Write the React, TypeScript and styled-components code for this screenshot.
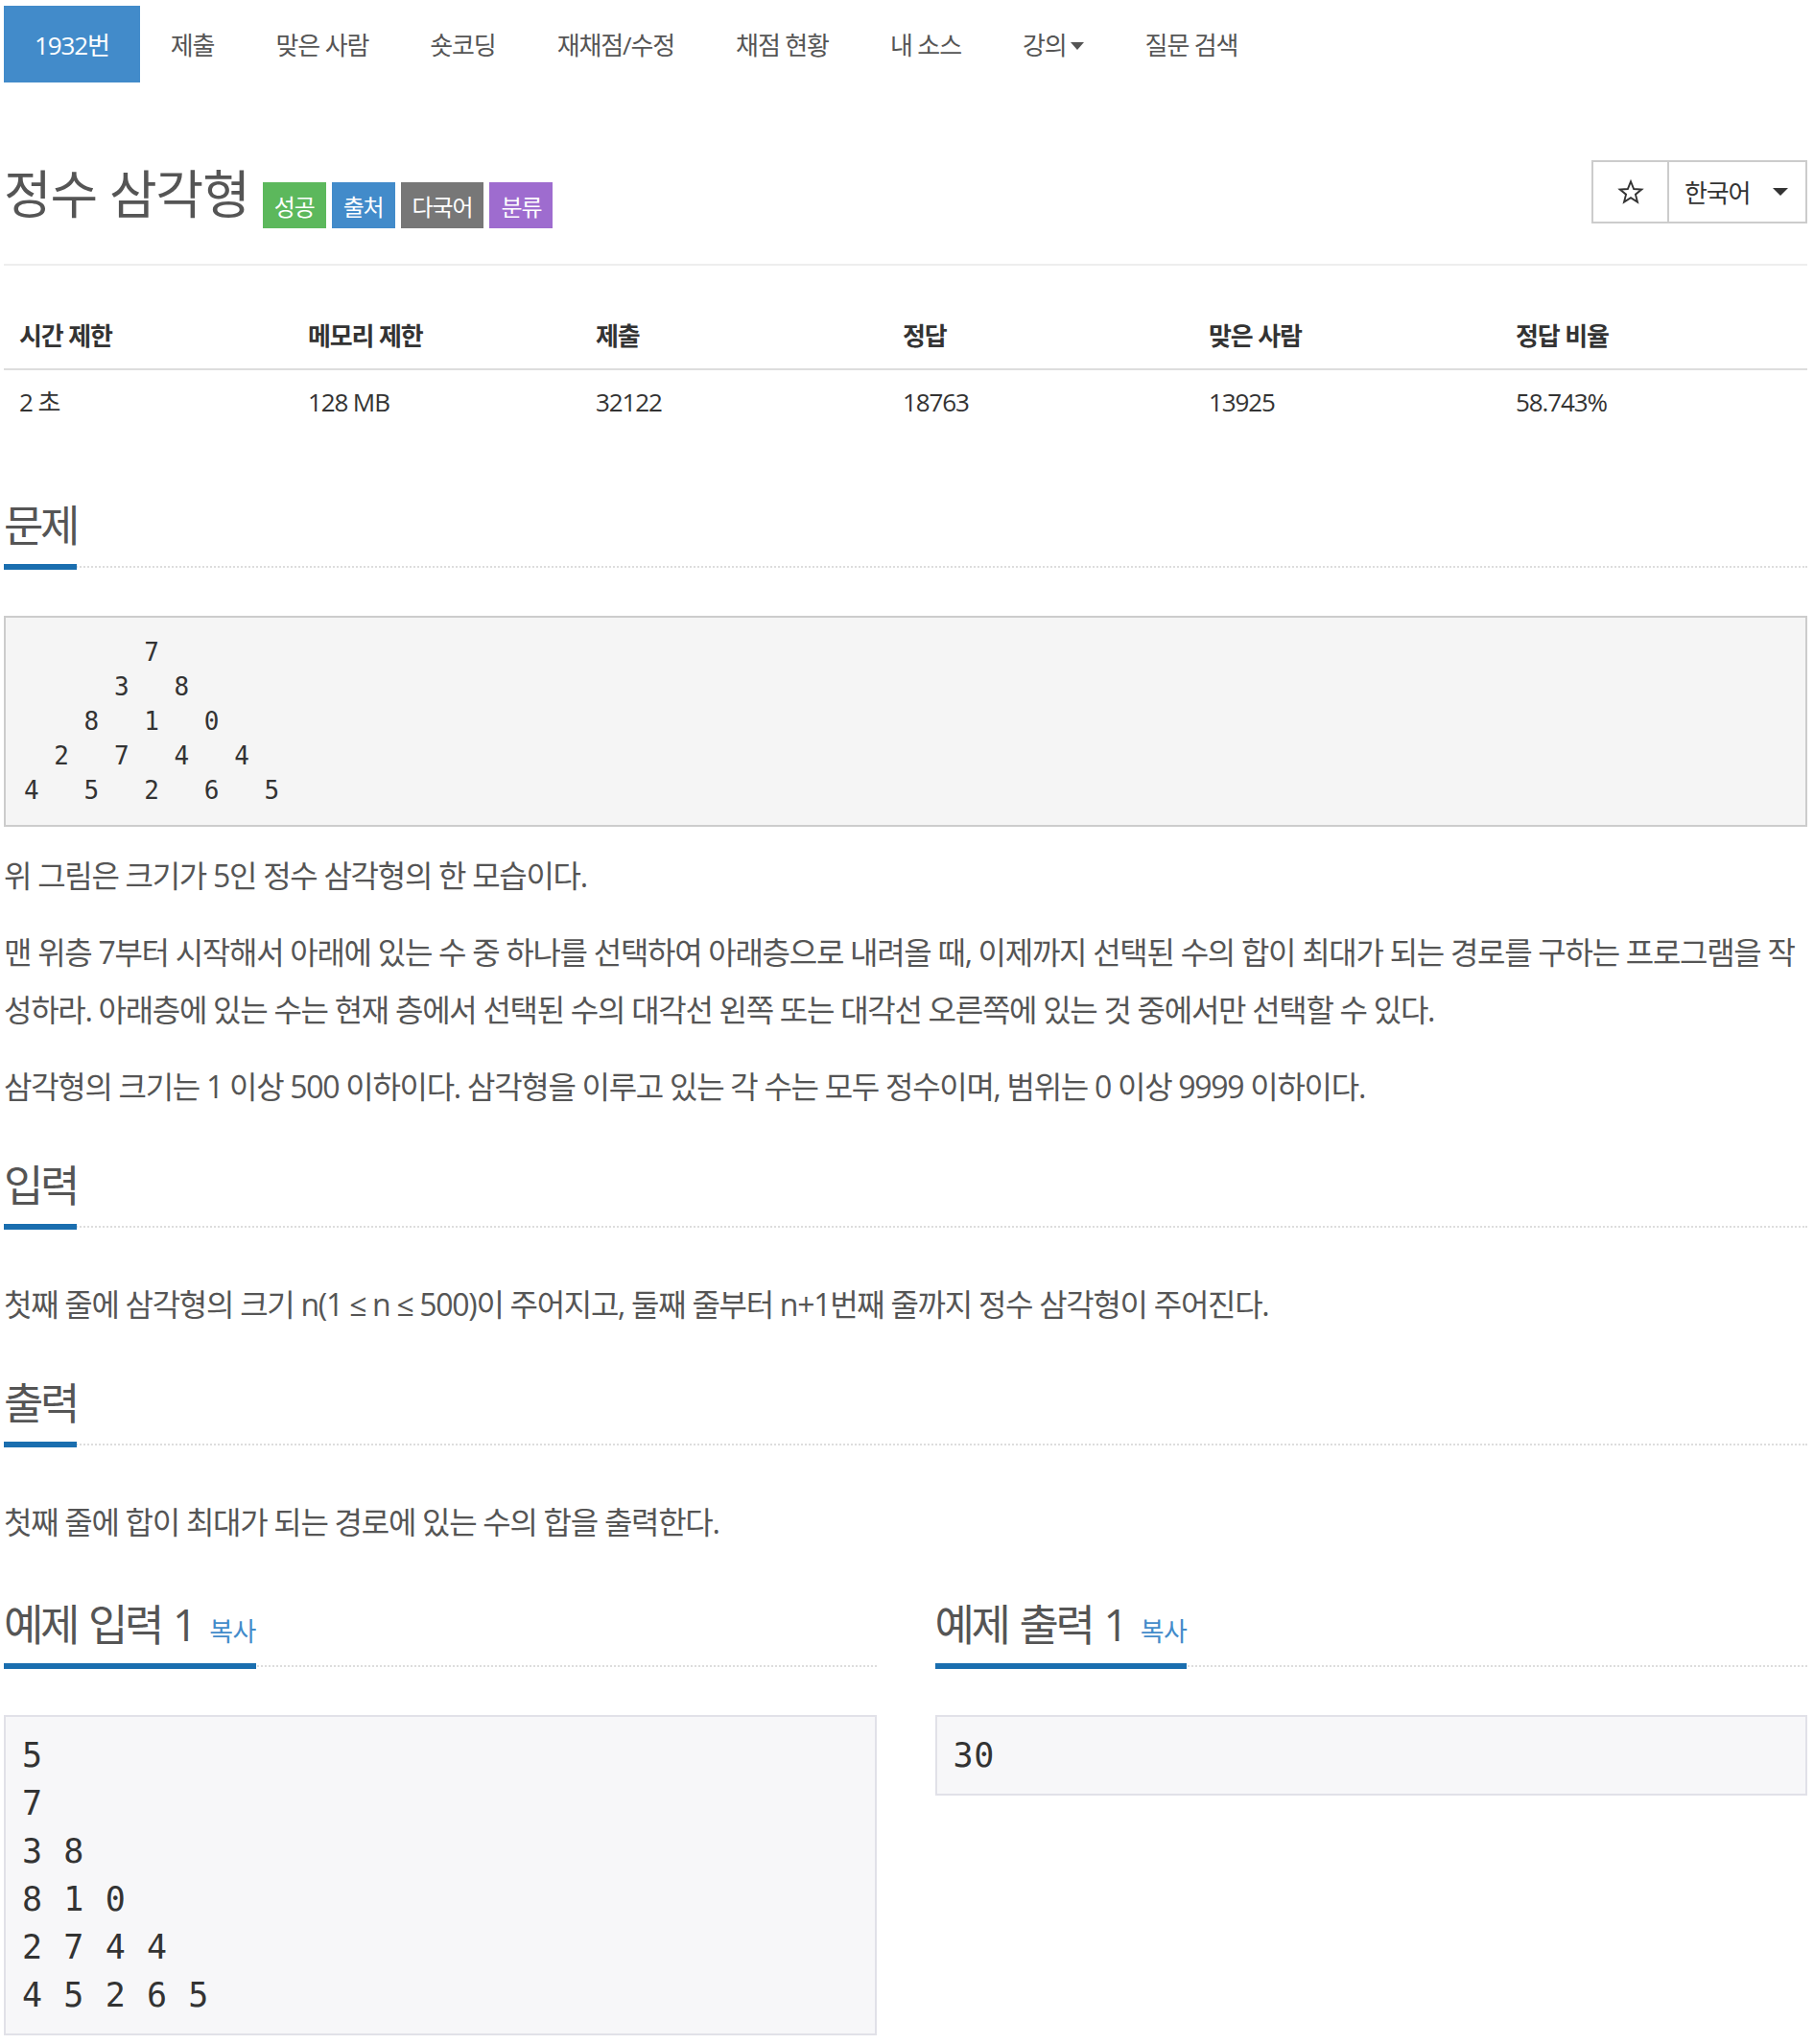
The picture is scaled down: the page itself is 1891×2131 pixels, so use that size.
import React from "react";
import styled, { createGlobalStyle } from "styled-components";

const GlobalStyle = createGlobalStyle`
  html, body {
    margin: 0;
    padding: 0;
    background: #fff;
  }
  body {
    font-family: "Open Sans", "Noto Sans CJK KR", sans-serif;
    color: #333;
    letter-spacing: -1.12px;
  }
`;

const Page = styled.div`
  padding: 6px 7px 40px 4px;
`;

const NavBar = styled.nav`
  display: flex;
  height: 80px;
`;

const NavItem = styled.a<{ $active?: boolean }>`
  display: flex;
  align-items: center;
  padding: 0 32px;
  font-size: 26px;
  text-decoration: none;
  color: ${(p) => (p.$active ? "#fff" : "#555")};
  background: ${(p) => (p.$active ? "#428bca" : "transparent")};
`;

const Caret = styled.span`
  display: inline-block;
  margin-left: 4px;
  margin-top: 4px;
  border-top: 8px solid #555;
  border-left: 7px solid transparent;
  border-right: 7px solid transparent;
`;

const Header = styled.div`
  display: flex;
  justify-content: space-between;
  align-items: flex-start;
  margin-top: 81px;
  padding-bottom: 37px;
  border-bottom: 2px solid #eee;
`;

const TitleRow = styled.div`
  display: flex;
  align-items: flex-start;
`;

const Title = styled.h1`
  margin: 4px 0 0;
  font-size: 54px;
  font-weight: 400;
  line-height: 62px;
  color: #555;
`;

const Labels = styled.div`
  display: flex;
  gap: 6px;
  margin: 23px 0 0 14px;
`;

const Label = styled.span<{ $bg: string }>`
  display: flex;
  align-items: center;
  height: 48px;
  padding: 0 12px;
  font-size: 24px;
  color: #fff;
  background: ${(p) => p.$bg};
`;

const ButtonGroup = styled.div`
  display: flex;
  height: 66px;
`;

const GroupButton = styled.button`
  display: flex;
  align-items: center;
  justify-content: center;
  box-sizing: border-box;
  height: 66px;
  border: 2px solid #ccc;
  background: #fff;
  font-family: inherit;
  letter-spacing: inherit;
  font-size: 26px;
  color: #333;
  & + & {
    margin-left: -2px;
  }
`;

const StarButton = styled(GroupButton)`
  width: 81px;
`;

const LangButton = styled(GroupButton)`
  width: 146px;
  justify-content: space-between;
  padding: 0 18px 0 16px;
`;

const LangCaret = styled.span`
  display: inline-block;
  border-top: 8px solid #333;
  border-left: 8px solid transparent;
  border-right: 8px solid transparent;
`;

const InfoTable = styled.div`
  display: grid;
  grid-template-columns: 301px 300px 320px 319px 320px 1fr;
  margin: 40px 0 70px;
  font-size: 26px;
`;

const HeadCell = styled.div`
  padding: 15px 16px;
  line-height: 37px;
  font-weight: 700;
  color: #333;
  border-bottom: 2px solid #ddd;
`;

const Cell = styled.div`
  padding: 15px 16px;
  line-height: 37px;
  color: #333;
`;

const Section = styled.section`
  margin-bottom: 48px;
`;

const Headline = styled.div`
  display: flex;
  margin-bottom: 50px;
  border-bottom: 2px dotted #ddd;
`;

const HeadTitle = styled.h2`
  margin: 0 0 -4px;
  padding-bottom: 15px;
  font-size: 45px;
  font-weight: 400;
  line-height: 50px;
  letter-spacing: -3.5px;
  word-spacing: 4px;
  color: #555;
  border-bottom: 6px solid #1a6eaf;
`;

const CopyLink = styled.a`
  margin-left: 16px;
  font-size: 27px;
  line-height: 1;
  letter-spacing: -0.5px;
  color: #428bca;
  text-decoration: none;
`;

const Figure = styled.pre`
  margin: 0 0 21px;
  padding: 18px 19px;
  border: 2px solid #ccc;
  background: #f5f5f5;
  font-family: "DejaVu Sans Mono", monospace;
  font-size: 26px;
  line-height: 36px;
  letter-spacing: 0;
  color: #333;
`;

const Paragraph = styled.p`
  margin: 0 0 20px;
  font-size: 32px;
  line-height: 60px;
  letter-spacing: -1.3px;
  color: #555;
`;

const SampleRow = styled.div`
  display: grid;
  grid-template-columns: 1fr 1fr;
  column-gap: 61px;
  margin-top: 52px;
`;

const SampleData = styled.pre`
  margin: 0;
  padding: 15px 17px;
  border: 2px solid #e1e1e8;
  background: #f7f7f9;
  font-family: "DejaVu Sans Mono", monospace;
  font-size: 35px;
  line-height: 50px;
  letter-spacing: 0.6px;
  color: #333;
`;

const StarIcon = () => (
  <svg width="28" height="27" viewBox="0 0 24 24" fill="none" stroke="#333" strokeWidth="1.7" strokeLinejoin="miter">
    <polygon points="12,2 14.8,8.9 22,9.3 16.4,13.9 18.2,21 12,17.1 5.8,21 7.6,13.9 2,9.3 9.2,8.9" />
  </svg>
);

const navItems = ["제출", "맞은 사람", "숏코딩", "재채점/수정", "채점 현황", "내 소스"];

const stats = [
  ["시간 제한", "2 초"],
  ["메모리 제한", "128 MB"],
  ["제출", "32122"],
  ["정답", "18763"],
  ["맞은 사람", "13925"],
  ["정답 비율", "58.743%"],
];

const triangle = `        7
      3   8
    8   1   0
  2   7   4   4
4   5   2   6   5`;

const sampleInput = `5
7
3 8
8 1 0
2 7 4 4
4 5 2 6 5`;

const App: React.FC = () => {
  return (
    <>
      <GlobalStyle />
      <Page>
        <NavBar>
          <NavItem $active>1932번</NavItem>
          {navItems.map((item) => (
            <NavItem key={item}>{item}</NavItem>
          ))}
          <NavItem>
            강의
            <Caret />
          </NavItem>
          <NavItem>질문 검색</NavItem>
        </NavBar>

        <Header>
          <TitleRow>
            <Title>정수 삼각형</Title>
            <Labels>
              <Label $bg="#5cb85c">성공</Label>
              <Label $bg="#428bca">출처</Label>
              <Label $bg="#777">다국어</Label>
              <Label $bg="#9e6ccf">분류</Label>
            </Labels>
          </TitleRow>
          <ButtonGroup>
            <StarButton>
              <StarIcon />
            </StarButton>
            <LangButton>
              한국어
              <LangCaret />
            </LangButton>
          </ButtonGroup>
        </Header>

        <InfoTable>
          {stats.map(([head]) => (
            <HeadCell key={head}>{head}</HeadCell>
          ))}
          {stats.map(([head, value]) => (
            <Cell key={head}>{value}</Cell>
          ))}
        </InfoTable>

        <Section>
          <Headline>
            <HeadTitle>문제</HeadTitle>
          </Headline>
          <Figure>{triangle}</Figure>
          <Paragraph>위 그림은 크기가 5인 정수 삼각형의 한 모습이다.</Paragraph>
          <Paragraph>
            맨 위층 7부터 시작해서 아래에 있는 수 중 하나를 선택하여 아래층으로 내려올 때, 이제까지 선택된 수의 합이 최대가 되는 경로를 구하는 프로그램을 작성하라. 아래층에 있는 수는 현재 층에서 선택된 수의 대각선 왼쪽 또는 대각선 오른쪽에 있는 것 중에서만 선택할 수 있다.
          </Paragraph>
          <Paragraph>
            삼각형의 크기는 1 이상 500 이하이다. 삼각형을 이루고 있는 각 수는 모두 정수이며, 범위는 0 이상 9999 이하이다.
          </Paragraph>
        </Section>

        <Section>
          <Headline>
            <HeadTitle>입력</HeadTitle>
          </Headline>
          <Paragraph>
            첫째 줄에 삼각형의 크기 n(1 ≤ n ≤ 500)이 주어지고, 둘째 줄부터 n+1번째 줄까지 정수 삼각형이 주어진다.
          </Paragraph>
        </Section>

        <Section>
          <Headline>
            <HeadTitle>출력</HeadTitle>
          </Headline>
          <Paragraph>첫째 줄에 합이 최대가 되는 경로에 있는 수의 합을 출력한다.</Paragraph>
        </Section>

        <SampleRow>
          <div>
            <Headline>
              <HeadTitle>
                예제 입력 1<CopyLink>복사</CopyLink>
              </HeadTitle>
            </Headline>
            <SampleData>{sampleInput}</SampleData>
          </div>
          <div>
            <Headline>
              <HeadTitle>
                예제 출력 1<CopyLink>복사</CopyLink>
              </HeadTitle>
            </Headline>
            <SampleData>30</SampleData>
          </div>
        </SampleRow>
      </Page>
    </>
  );
};

export default App;
